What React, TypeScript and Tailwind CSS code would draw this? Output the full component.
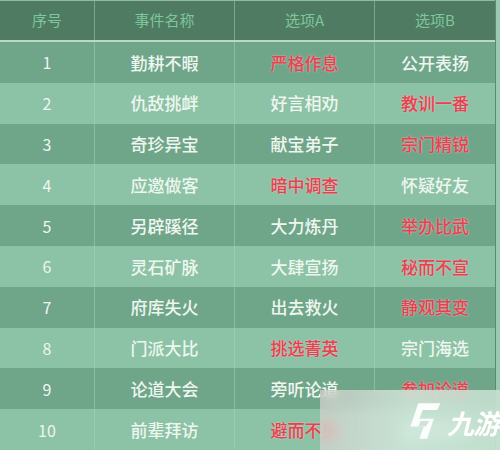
import React from 'react';

type Row = {
  no: number;
  name: string;
  a: string;
  b: string;
  pick: 'a' | 'b';
};

const rows: Row[] = [
  { no: 1, name: '勤耕不暇', a: '严格作息', b: '公开表扬', pick: 'a' },
  { no: 2, name: '仇敌挑衅', a: '好言相劝', b: '教训一番', pick: 'b' },
  { no: 3, name: '奇珍异宝', a: '献宝弟子', b: '宗门精锐', pick: 'b' },
  { no: 4, name: '应邀做客', a: '暗中调查', b: '怀疑好友', pick: 'a' },
  { no: 5, name: '另辟蹊径', a: '大力炼丹', b: '举办比武', pick: 'b' },
  { no: 6, name: '灵石矿脉', a: '大肆宣扬', b: '秘而不宣', pick: 'b' },
  { no: 7, name: '府库失火', a: '出去救火', b: '静观其变', pick: 'b' },
  { no: 8, name: '门派大比', a: '挑选菁英', b: '宗门海选', pick: 'a' },
  { no: 9, name: '论道大会', a: '旁听论道', b: '参加论道', pick: 'b' },
  { no: 10, name: '前辈拜访', a: '避而不见', b: '热情款待', pick: 'a' },
];

const font = "font-['Noto_Sans_CJK_SC','Noto_Sans',sans-serif]";
const cell = 'flex items-center justify-center border-r border-[#a9d1bb]/50';
const red = 'text-[#e4424f] [text-shadow:0_0_2px_#f8c6cc]';
const plain = 'text-[#eef6f0]';

// 9游 watermark in the bottom right corner
const Watermark: React.FC = () => (
  <div className="absolute left-[320px] top-[390px] w-[180px] h-[60px] backdrop-blur-[6px] bg-gradient-to-r from-[#e6d9d9]/60 via-[#d6ebdf]/80 to-[#cfe6d8]/80 flex items-center justify-end pr-[1px] gap-[2px]">
    <svg width="38" height="40" viewBox="0 0 34 36" className="mt-[1px]">
      <path
        d="M10 2 L30 2 L27 8 L14 8 L11 16 L24 16 L18 34 L11 34 L15 23 L3 23 Z"
        fill="#ffffff"
        opacity="0.95"
      />
      <path d="M12 18 L20 18 L17 23 L10 23 Z" fill="#cfe3d6" />
    </svg>
    <span className="text-[27px] leading-none font-bold italic text-white tracking-[-1px] font-['Noto_Sans_CJK_SC',sans-serif] mt-[4px]">
      九游
    </span>
  </div>
);

export default function App() {
  return (
    <div className={`relative w-[500px] h-[450px] overflow-hidden bg-[#9cc8b0] ${font}`}>
      <div className="w-[496px] border-r border-[#5c8a71]">
        {/* header */}
        <div className="flex h-[42px] bg-[#4f7b63] border-t border-[#8fb9a1] border-b-2 border-b-[#b7d9c5] text-[15px] text-[#7ec79b]">
          <div className={`${cell} w-[95px]`}>序号</div>
          <div className={`${cell} w-[140px]`}>事件名称</div>
          <div className={`${cell} w-[140px]`}>选项A</div>
          <div className="flex items-center justify-center flex-1">选项B</div>
        </div>
        {rows.map((r) => (
          <div
            key={r.no}
            className={`flex h-[40.8px] text-[17px] font-medium ${r.no % 2 === 1 ? 'bg-[#6fa589]' : 'bg-[#8cc2a5]'}`}
          >
            <div className={`${cell} w-[95px] ${plain} text-[16px] font-normal`}>{r.no}</div>
            <div className={`${cell} w-[140px] ${plain}`}>{r.name}</div>
            <div className={`${cell} w-[140px] ${r.pick === 'a' ? red : plain}`}>{r.a}</div>
            <div className={`flex items-center justify-center flex-1 ${r.pick === 'b' ? red : plain}`}>
              {r.b}
            </div>
          </div>
        ))}
      </div>
      <Watermark />
    </div>
  );
}
